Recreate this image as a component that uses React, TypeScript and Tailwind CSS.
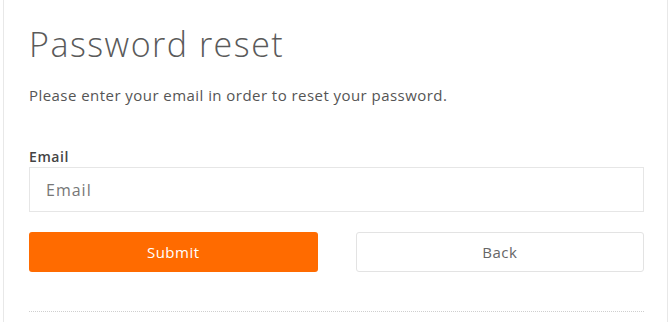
import React from "react";

export default function App() {
  return (
    <div className="w-[671px] h-[322px] bg-white overflow-hidden" style={{ fontFamily: '"Open Sans", sans-serif' }}>
      <div className="ml-[3px] w-[665px] h-full border-x border-[#e8e8e8] pl-[25px] pr-[23px] pt-[22px]">
        <h1 className="text-[34px] leading-[44px] font-light tracking-[1.5px] text-[#5a5a5a]">Password reset</h1>
        <p className="mt-[19px] text-[15px] leading-[20px] tracking-[0.45px] text-[#555]">Please enter your email in order to reset your password.</p>
        <label className="block mt-[43px] text-[14px] leading-[18px] font-semibold tracking-[0.6px] text-[#444]">Email</label>
        <input
          className="mt-[1px] block w-full h-[45px] border border-[#e6e6e6] px-[16px] text-[16px] tracking-[1px] text-[#666] placeholder:text-[#777] outline-none"
          placeholder="Email"
        />
        <div className="mt-[20px] grid grid-cols-2 gap-[38px]">
          <button className="h-[40px] rounded-[3px] bg-[#ff6b00] text-white text-[15px] tracking-[0.5px]">Submit</button>
          <button className="h-[40px] rounded-[3px] border border-[#e3e3e3] bg-white text-[#666] text-[15px] tracking-[0.5px]">Back</button>
        </div>
        <div className="mt-[39px] border-t border-dotted border-[#cfcfcf]" />
      </div>
    </div>
  );
}
